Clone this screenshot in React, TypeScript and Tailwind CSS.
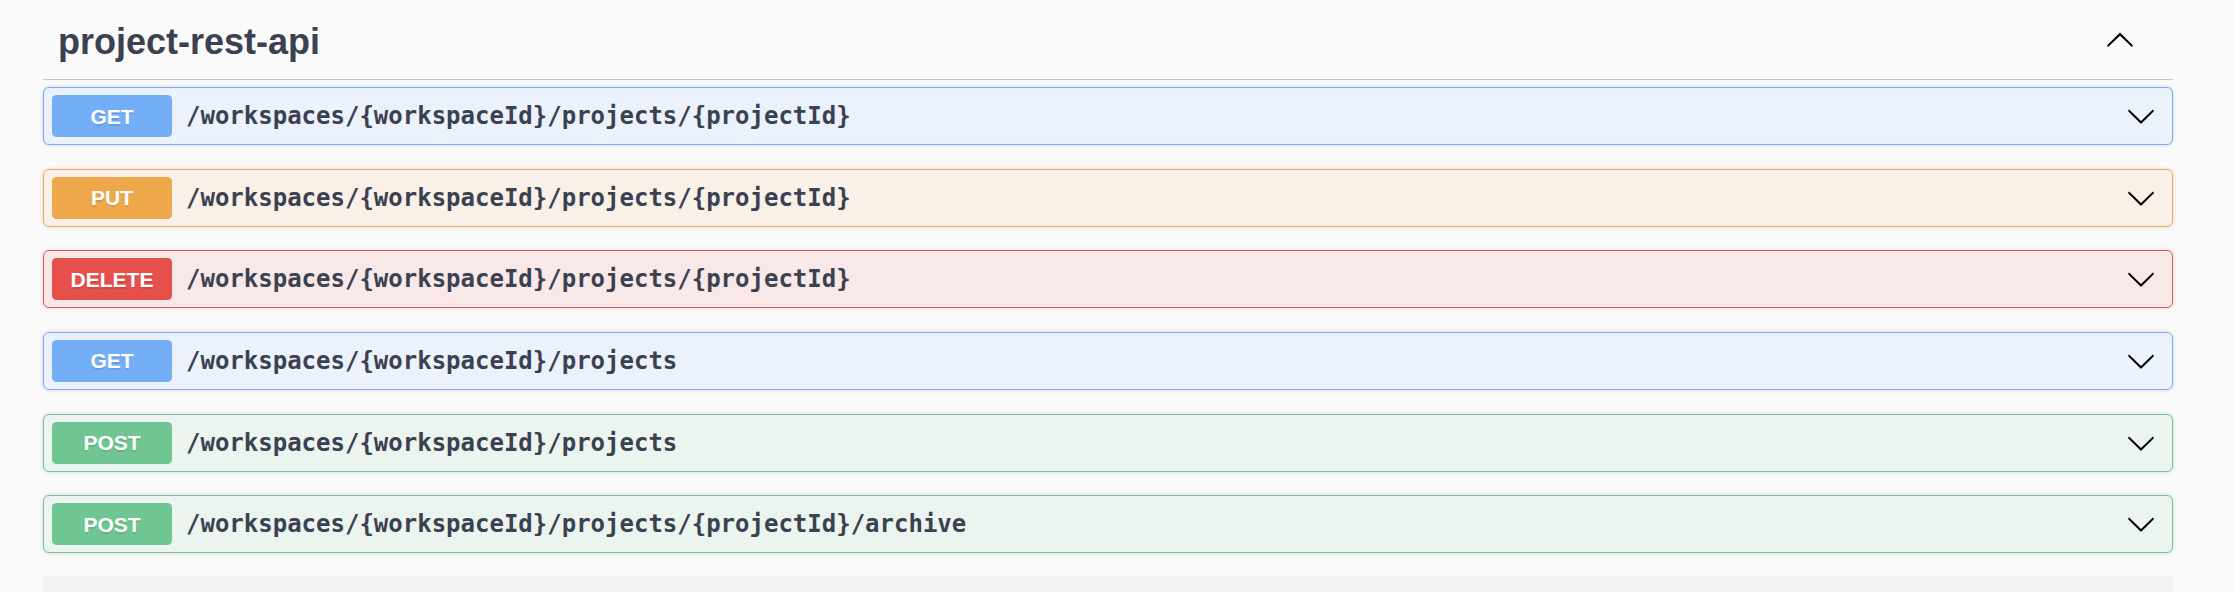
import React from 'react';

type Method = 'GET' | 'PUT' | 'DELETE' | 'POST';

const styles: Record<Method, { row: string; badge: string }> = {
  GET: { row: 'bg-[#ebf2fb] border-[#74aef8]', badge: 'bg-[#74aef7]' },
  PUT: { row: 'bg-[#f9f0e8] border-[#f0aa50]', badge: 'bg-[#eea84b]' },
  DELETE: { row: 'bg-[#f8e8e8] border-[#e9534f]', badge: 'bg-[#e5504b]' },
  POST: { row: 'bg-[#ecf4ef] border-[#72c795]', badge: 'bg-[#6fc693]' },
};

const operations: { method: Method; path: string }[] = [
  { method: 'GET', path: '/workspaces/{workspaceId}/projects/{projectId}' },
  { method: 'PUT', path: '/workspaces/{workspaceId}/projects/{projectId}' },
  { method: 'DELETE', path: '/workspaces/{workspaceId}/projects/{projectId}' },
  { method: 'GET', path: '/workspaces/{workspaceId}/projects' },
  { method: 'POST', path: '/workspaces/{workspaceId}/projects' },
  { method: 'POST', path: '/workspaces/{workspaceId}/projects/{projectId}/archive' },
];

function ArrowDown() {
  return (
    <svg width="30" height="30" viewBox="0 0 20 20" className="shrink-0" fill="#000">
      <path d="M17.418 6.109c.272-.268.709-.268.979 0s.271.701 0 .969l-7.908 7.83c-.27.268-.707.268-.979 0l-7.908-7.83c-.27-.268-.27-.701 0-.969.271-.268.709-.268.979 0L10 13.25l7.418-7.141z" />
    </svg>
  );
}

function ArrowUp() {
  return (
    <svg width="30" height="30" viewBox="0 0 20 20" className="shrink-0 -mt-[5px]" fill="#000">
      <path d="M17.418 14.908c.272.268.709.268.979 0s.271-.701 0-.969l-7.908-7.83c-.27-.268-.707-.268-.979 0l-7.908 7.83c-.27.268-.27.701 0 .969.271.268.709.268.979 0L10 7.767l7.418 7.141z" />
    </svg>
  );
}

function Operation({ method, path }: { method: Method; path: string }) {
  const s = styles[method];
  return (
    <div
      className={`flex items-center h-[58px] border rounded-[6px] pl-[8px] pr-[16px] shadow-[0_0_4px_rgba(0,0,0,0.15)] ${s.row}`}
    >
      <span
        className={`w-[120px] h-[42px] flex items-center justify-center rounded-[4.5px] text-white font-bold text-[21px] [text-shadow:0_1.5px_0_rgba(0,0,0,0.1)] font-['Liberation_Sans',Arial,sans-serif] ${s.badge}`}
      >
        {method}
      </span>
      <span className="ml-[14px] flex-1 text-[24px] font-bold text-[#3b4151] font-['DejaVu_Sans_Mono',monospace]">
        {path}
      </span>
      <ArrowDown />
    </div>
  );
}

export default function App() {
  return (
    <div className="min-h-screen bg-[#fafafa] overflow-hidden">
      <div className="ml-[43px] w-[2130px]">
        <div className="flex items-center justify-between pt-[21px] pb-[17px] pl-[15px] pr-[38px] border-b border-[#c4c6cb]">
          <h3 className="text-[36px] leading-[41px] font-bold text-[#3b4151] font-['Liberation_Sans',Arial,sans-serif]">
            project-rest-api
          </h3>
          <ArrowUp />
        </div>
        <div className="mt-[7.3px] flex flex-col gap-[23.6px]">
          {operations.map((op, i) => (
            <Operation key={i} method={op.method} path={op.path} />
          ))}
        </div>
        <div className="mt-[22.4px] h-[60px] bg-[#f3f3f3]" />
      </div>
    </div>
  );
}
